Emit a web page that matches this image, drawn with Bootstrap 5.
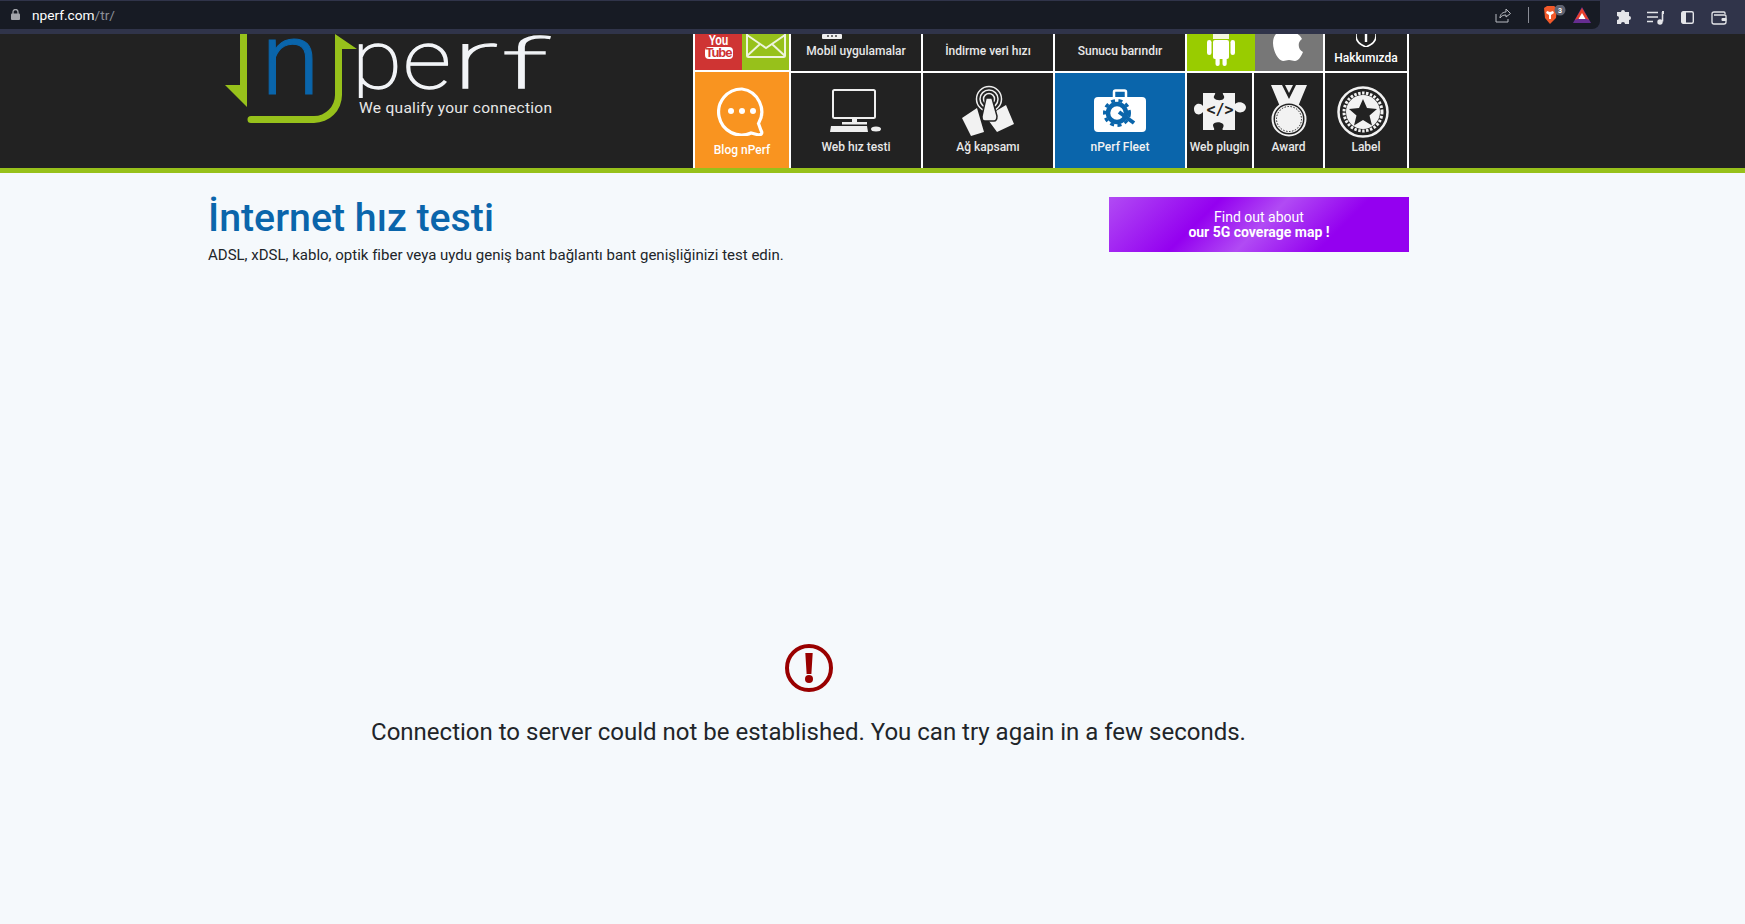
<!DOCTYPE html>
<html lang="tr">
<head>
<meta charset="utf-8">
<title>nPerf</title>
<link href="https://cdn.jsdelivr.net/npm/bootstrap@5.3.0/dist/css/bootstrap.min.css" rel="stylesheet">
<style>
html,body{height:924px;overflow:hidden}
body{background:#f5f9fc;font-family:Roboto,"Liberation Sans",sans-serif;color:#212529}
.chrome{height:34px;background:#30344a}
.chrome-url{width:1600px;height:28px;margin-top:1px;background:#171b24;border-bottom-right-radius:8px;padding-left:11px;padding-right:9px;font-size:13.7px;color:#fff}
.chrome-url .url-path{color:#8b8e96}
.chrome-tools{padding-top:1px;padding-left:7px}
.tool-slot{width:32px;display:flex;justify-content:center;align-items:center}
.ext-sep{width:1px;height:16px;background:#8a8d96;margin:0 14px 0 17px}
.site-head{height:134px;background:#222}
.head-gutter{width:208px}
.logo-box{width:485px;padding-left:17px}
.logo-box svg{overflow:visible;display:block}
.tile-grid{display:grid;grid-template-columns:94px 130px 130px 130px 65px 69px 82px;grid-template-rows:37px 95px;gap:2px;padding:0 2px;background:#fff;width:716px}
.tile{background:#222;color:#e8e8e8;font-size:12px;font-weight:500;overflow:hidden;display:flex;flex-direction:column;align-items:center;line-height:14px;white-space:nowrap}
.tile-low{justify-content:flex-end;padding-bottom:13px}
.tile svg{display:block;flex-shrink:0}
.tile-label{margin-top:auto;padding-bottom:14px}
.tile-blog{background:#f99420;color:#fff;margin-top:-1px;padding-top:15px}
.tile-blog .tile-label{padding-bottom:11px}
.tile-fleet{background:#0a65ab;color:#f2f2f2}
.pad-12{padding-top:12px}
.pad-13{padding-top:13px}
.pad-16{padding-top:16px}
.pad-19{padding-top:19px}
.phone-shift{margin-right:48px;margin-bottom:5px}
.star-shift{margin-right:6px}
.pair-wide{grid-column:span 2}
.tile-pair{display:flex;overflow:hidden;background:#fff}
.tile-half{flex:1 1 50%;display:flex;justify-content:center;align-items:flex-end;overflow:hidden}
.tile-pair-social{margin-bottom:1px}
.bg-yt{background:#cf3433}
.bg-mail{background:#97c11b;padding-bottom:12px}
.bg-droid{background:#9c0;padding-bottom:5px}
.bg-apple{background:#777;padding-bottom:9px}
.yt-you{font-family:"Liberation Sans",sans-serif;font-weight:700;font-size:15px;line-height:13px;color:#fff;transform:scaleX(.72)}
.yt-tube{background:#fff;color:#cf3433;font-family:"Liberation Sans",sans-serif;font-weight:700;font-size:13px;line-height:12px;border-radius:4px;width:28px;text-align:center;letter-spacing:-1px;margin-top:1px}
.yt-box{display:flex;flex-direction:column;align-items:center;padding-bottom:11px}
.tile-about{color:#fff;justify-content:flex-end;padding-bottom:6px}
.head-rule{height:5px;background:#97c11b}
.page-wrap{width:1201px;margin-left:208px}
.page-title{font-size:39.3px;font-weight:500;line-height:44px;color:#0a65ab;margin:0;padding-top:23px}
.page-sub{font-size:15px;line-height:20px;margin:5px 0 0}
.promo{width:300px;height:55px;margin-top:24px;background:linear-gradient(135deg,#b14bf4 0,#9400f0 32%,#b14bf4 51%,#9400f0 74%,#9400f0 100%);color:#fff;font-size:14px;line-height:15px}
.promo b{font-weight:700}
.err-box{margin-top:379px}
.err-text{font-size:24px;line-height:32px;margin-top:24px}
</style>
</head>
<body>
<div class="chrome d-flex">
  <div class="chrome-url d-flex align-items-center justify-content-between">
    <div class="d-flex align-items-center">
      <svg width="9" height="11" viewBox="0 0 9 11" class="me-2"><path d="M2 5V3a2.500 2.500 0 0 1 5 0v2" fill="none" stroke="#a3a5ab" stroke-width="1.300"/><rect y="4.500" width="9" height="6.500" rx="1" fill="#a3a5ab"/></svg>
      <span class="ms-1">nperf.com<span class="url-path">/tr/</span></span>
    </div>
    <div class="d-flex align-items-center">
      <svg width="16" height="15" viewBox="0 0 16 15"><path d="M1 6v8h12v-3M5 10c0-4 3-6 6-6V1l4.500 4.500L11 9V7C8 7 6 8 5 10z" fill="none" stroke="#b9bbc1" stroke-width="1"/></svg>
      <div class="ext-sep"></div>
      <svg width="26" height="20" viewBox="0 0 26 20"><path d="M1 3l3-2h7l3 2-1 10-6 6-5-6z" fill="#f1592a"/><path d="M4 6l3 1 3-1 1 2-3 2v4H6v-4L3 8z" fill="#fff"/><circle cx="17" cy="5" r="5.500" fill="#5e6270"/><text x="17" y="7.500" font-size="7" font-weight="700" fill="#fff" text-anchor="middle" font-family="Roboto">3</text></svg>
      <svg class="ms-1" width="18" height="16" viewBox="0 0 18 16"><path d="M9 0l9 16H0z" fill="#662d91"/><path d="M9 1L16 13 9 10 2 13z" fill="#e8402a"/><path d="M9 6l3.500 6h-7z" fill="#fff"/></svg>
    </div>
  </div>
  <div class="chrome-tools d-flex flex-grow-1 align-items-center">
    <div class="tool-slot"><svg width="15" height="15" viewBox="0 0 15 15"><path d="M5 2a2 2 0 0 1 4 0h4v4a2 2 0 0 1 0 4v4H9a2 2 0 0 0-4 0H1v-4a2 2 0 0 0 0-4V2z" fill="#e4e5e9"/></svg></div>
    <div class="tool-slot"><svg width="17" height="14" viewBox="0 0 17 14"><path d="M0 1.500h11M0 6h11M0 10.500h6" stroke="#e4e5e9" stroke-width="1.400"/><path d="M15.500 1v9.500" stroke="#e4e5e9" stroke-width="1.600"/><path d="M15 0h2v3h-2z" fill="#e4e5e9"/><circle cx="13" cy="11" r="2.700" fill="#e4e5e9"/></svg></div>
    <div class="tool-slot"><svg width="13" height="13" viewBox="0 0 13 13"><rect x=".7" y=".7" width="11.600" height="11.600" rx="1.500" fill="none" stroke="#e4e5e9" stroke-width="1.400"/><rect x="1" y="1" width="4" height="11" fill="#e4e5e9"/></svg></div>
    <div class="tool-slot"><svg width="16" height="14" viewBox="0 0 16 14"><path d="M14 3V2a1 1 0 0 0-1-1H3a2 2 0 0 0-2 2v8a2 2 0 0 0 2 2h10a2 2 0 0 0 2-2V5a1 1 0 0 0-1-1H3" fill="none" stroke="#e4e5e9" stroke-width="1.300"/><rect x="10.500" y="7" width="5" height="3" rx="1" fill="#e4e5e9"/></svg></div>
  </div>
</div>

<header class="site-head d-flex">
  <div class="head-gutter"></div>
  <div class="logo-box flex-shrink-0">
    <svg width="335" height="100" viewBox="225 34 335 100">
      <defs><clipPath id="perfClip"><rect x="340" y="34" width="230" height="64"/></clipPath></defs>
      <path d="M240 34h7v73l-22-22h15z" fill="#97c11b"/>
      <path d="M335 49V34l22 15h-15v46a28 28 0 0 1-28 28h-63a3.500 3.500 0 0 1 0-7h63a21 21 0 0 0 21-21z" fill="#97c11b"/>
      <text x="261" y="94" font-family="Roboto" font-size="102" font-weight="300" fill="#0a65ab" stroke="#0a65ab" stroke-width="1" textLength="59" lengthAdjust="spacingAndGlyphs">n</text>
      <text y="88" font-family="Roboto" font-size="81" font-weight="100" fill="#f2f4f7" stroke="#f2f4f7" stroke-width="1.300" clip-path="url(#perfClip)"><tspan x="352" textLength="50" lengthAdjust="spacingAndGlyphs">p</tspan><tspan x="403" textLength="48" lengthAdjust="spacingAndGlyphs">e</tspan><tspan x="452" textLength="46" lengthAdjust="spacingAndGlyphs">r</tspan><tspan x="501" font-size="69" textLength="47" lengthAdjust="spacingAndGlyphs">f</tspan></text>
      <text x="359" y="113" font-family="Roboto" font-size="15.500" fill="#e8e8e8" textLength="193" lengthAdjust="spacing">We qualify your connection</text>
    </svg>
  </div>
  <nav class="tile-grid" aria-label="nPerf">
    <div class="tile-pair tile-pair-social">
      <a class="tile-half bg-yt text-decoration-none"><span class="yt-box"><span class="yt-you">You</span><span class="yt-tube">Tube</span></span></a>
      <a class="tile-half bg-mail"><svg width="40" height="26" viewBox="0 0 40 26"><rect x="1" y="1" width="38" height="24" rx="1.500" fill="none" stroke="#eef4dc" stroke-width="2"/><path d="M1 3l19 13L39 3M1 24l13-12M39 24L26 12" fill="none" stroke="#eef4dc" stroke-width="2"/></svg></a>
    </div>
    <div class="tile tile-low"><svg class="phone-shift" width="20" height="5" viewBox="0 0 20 5"><rect width="20" height="5" rx="1" fill="#eee"/><circle cx="6" cy="2" r="1" fill="#444"/><circle cx="10" cy="2" r="1" fill="#444"/><circle cx="14" cy="2" r="1" fill="#444"/></svg><span>Mobil uygulamalar</span></div>
    <div class="tile tile-low"><span>İndirme veri hızı</span></div>
    <div class="tile tile-low"><span>Sunucu barındır</span></div>
    <div class="tile-pair pair-wide">
      <div class="tile-half bg-droid"><svg width="34" height="34" viewBox="0 0 34 34"><path d="M9 2a8 7 0 0 1 16 0v5H9z" fill="#f5f8e0"/><rect x="9" y="8" width="16" height="19" rx="2" fill="#fff"/><rect x="3" y="8" width="4.500" height="15" rx="2.200" fill="#fff"/><rect x="26.500" y="8" width="4.500" height="15" rx="2.200" fill="#fff"/><rect x="11.500" y="25" width="4.200" height="9" rx="2" fill="#fff"/><rect x="18.500" y="25" width="4.200" height="9" rx="2" fill="#fff"/></svg></div>
      <div class="tile-half bg-apple"><svg width="34" height="30" viewBox="0 0 34 30"><path d="M17 2c-7-6-16-2-16 9 0 9 6 18 10 18 3 0 3-1 6-1s3 1 6 1c3 0 6-4 8-9-5-2-6-10-1-13C27 1 21-1 17 2z" fill="#fff"/></svg></div>
    </div>
    <div class="tile tile-about"><svg width="20" height="14" viewBox="0 0 20 14"><path d="M0 0h20v3c0 5-5 9-10 11C5 12 0 8 0 3z" fill="none" stroke="#fff" stroke-width="1.600"/><rect x="8.800" y="0" width="2.400" height="9" fill="#fff"/></svg><span class="mt-1">Hakkımızda</span></div>

    <a class="tile tile-blog text-decoration-none"><svg width="50" height="49" viewBox="0 0 50 49"><path d="M25 2a23 23 0 1 0 9 44l6 1.500c4 1 6-1 4-4l-2.500-7A23 23 0 0 0 25 2z" fill="none" stroke="#fff" stroke-width="3.200"/><circle cx="14" cy="24" r="3" fill="#fff"/><circle cx="25" cy="24" r="3" fill="#fff"/><circle cx="36" cy="24" r="3" fill="#fff"/></svg><span class="tile-label">Blog nPerf</span></a>
    <a class="tile pad-16 text-decoration-none"><svg width="54" height="44" viewBox="0 0 54 44"><rect x="4" y="1" width="42" height="28" rx="1.500" fill="none" stroke="#eee" stroke-width="2"/><rect x="23" y="29" width="5" height="5" fill="#eee"/><rect x="13" y="33" width="25" height="2.500" fill="#eee"/><path d="M2 37h36l1 6H1z" fill="#eee"/><ellipse cx="47" cy="40" rx="5" ry="2.500" fill="#eee"/></svg><span class="tile-label">Web hız testi</span></a>
    <a class="tile pad-12 text-decoration-none"><svg width="52" height="51" viewBox="0 0 52 51"><g fill="none" stroke="#eee" stroke-width="1.500"><circle cx="27" cy="14" r="12.500"/><circle cx="27" cy="14" r="9"/><circle cx="27" cy="14" r="5.500"/></g><path d="M0 33l15-10 7 24-13 4zM24 32l20-12 8 19-17 8z" fill="#f2f2f2"/><path d="M24 13h6l5 18c0 3-1 5-3 5H23c-3 0-3-2-3-5z" fill="#f2f2f2" stroke="#222" stroke-width="1.500"/></svg><span class="tile-label">Ağ kapsamı</span></a>
    <a class="tile tile-fleet pad-16 text-decoration-none"><svg width="52" height="43" viewBox="0 0 52 43"><rect x="20" y="1.500" width="12" height="9" rx="1.500" fill="none" stroke="#fff" stroke-width="2.500"/><rect y="8" width="52" height="35" rx="4" fill="#fff"/><circle cx="23" cy="24" r="9" fill="none" stroke="#0a65ab" stroke-width="4.500"/><circle cx="23" cy="24" r="12.500" fill="none" stroke="#0a65ab" stroke-width="3" stroke-dasharray="4 3.500"/><path d="M25 23l15 11" stroke="#0a65ab" stroke-width="4"/></svg><span class="tile-label">nPerf Fleet</span></a>
    <a class="tile pad-19 text-decoration-none"><svg width="52" height="39" viewBox="0 0 52 39"><path d="M9 1h12c1 1-2 3-1 5 2 3 9 3 10 0 1-2-2-4-1-5h12v11c3-3 10-2 11 3 0 6-8 7-11 3v20H29c-2-1 2-3 0-6-3-3-10-2-10 1 0 2 2 4 1 5H9V20c-3 4-9 3-9-3 0-5 6-7 9-3z" fill="#f2f2f2"/><text x="26" y="23" font-family="'DejaVu Sans Mono',monospace" font-size="15" font-weight="700" fill="#222" text-anchor="middle">&lt;/&gt;</text></svg><span class="tile-label">Web plugin</span></a>
    <a class="tile pad-12 text-decoration-none"><svg width="36" height="52" viewBox="0 0 36 52"><path d="M0 0h11l7 14 7-14h11l-10 24H10z" fill="#f2f2f2"/><path d="M14 0h8l-4 8z" fill="#f2f2f2"/><circle cx="18" cy="34" r="16.500" fill="#222" stroke="#f2f2f2" stroke-width="2"/><circle cx="18" cy="34" r="14" fill="#f2f2f2"/><circle cx="18" cy="34" r="12.500" fill="none" stroke="#222" stroke-width="1" stroke-dasharray="1.500 1.500"/></svg><span class="tile-label">Award</span></a>
    <a class="tile pad-13 text-decoration-none"><svg class="star-shift" width="52" height="52" viewBox="0 0 52 52"><circle cx="26" cy="26" r="24.500" fill="none" stroke="#f2f2f2" stroke-width="2.500"/><circle cx="26" cy="26" r="19" fill="none" stroke="#f2f2f2" stroke-width="3" stroke-dasharray="2.500 1.500"/><circle cx="26" cy="26" r="17" fill="#f2f2f2"/><path d="M26 13l4 9 10 1-7.500 6.500 2.500 10-9-5.500-9 5.500 2.500-10L12 23l10-1z" fill="#222"/></svg><span class="tile-label">Label</span></a>
  </nav>
</header>
<div class="head-rule"></div>

<main class="page-wrap">
  <div class="d-flex justify-content-between align-items-start">
    <div>
      <h1 class="page-title">İnternet hız testi</h1>
      <p class="page-sub">ADSL, xDSL, kablo, optik fiber veya uydu geniş bant bağlantı bant genişliğinizi test edin.</p>
    </div>
    <a class="promo d-flex flex-column align-items-center justify-content-center text-decoration-none"><span>Find out about</span><b>our 5G coverage map !</b></a>
  </div>
  <div class="err-box d-flex flex-column align-items-center">
    <svg width="48" height="48" viewBox="0 0 48 48"><circle cx="24" cy="24" r="22" fill="none" stroke="#990000" stroke-width="4"/><path d="M20.300 9h7.400l-1.300 21h-4.800z" fill="#990000"/><circle cx="24" cy="35" r="4" fill="#990000"/></svg>
    <div class="err-text">Connection to server could not be established. You can try again in a few seconds.</div>
  </div>
</main>
</body>
</html>
